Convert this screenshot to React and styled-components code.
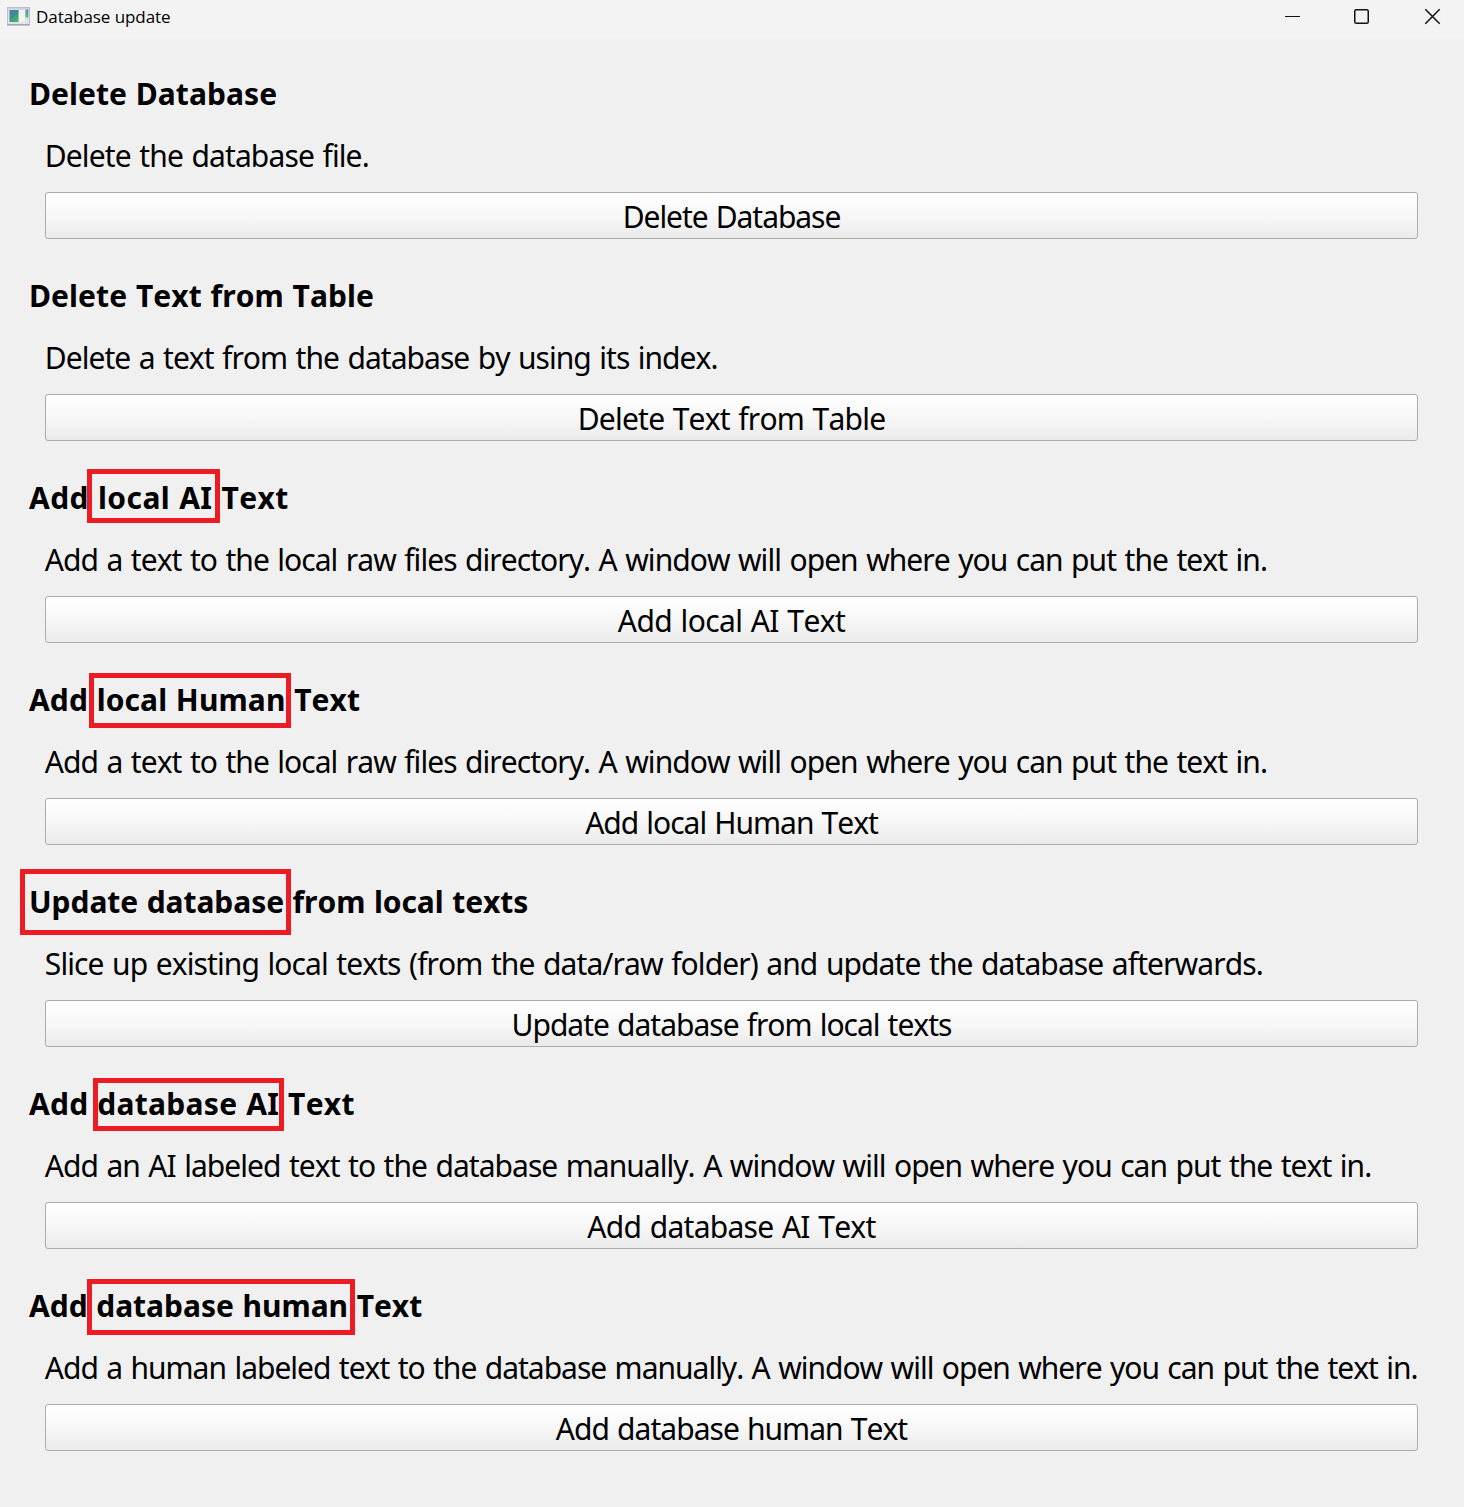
import React from 'react';
import styled, { createGlobalStyle } from 'styled-components';

const GlobalStyle = createGlobalStyle`
  * { box-sizing: border-box; }
  body { margin: 0; background: #f0f0f0; }
`;

const Window = styled.div`
  display: flex;
  flex-direction: column;
  width: 1464px;
  height: 1507px;
  overflow: hidden;
  background: #f0f0f0;
  color: #000;
  font-family: "Noto Sans", "Open Sans", sans-serif;
  font-kerning: none;
`;

const TitleBar = styled.header`
  display: flex;
  align-items: flex-start;
  flex: none;
  height: 39px;
  padding-left: 7px;
  background: #f3f3f3;
`;

const AppIcon = styled.svg`
  flex: none;
  width: 23px;
  height: 19px;
  margin-top: 7px;
`;

const WindowTitle = styled.h1`
  flex: 1;
  margin: 0;
  padding-left: 6px;
  font: 400 17px/34px "Open Sans", "Noto Sans", sans-serif;
  letter-spacing: -0.06px;
`;

const WindowControls = styled.div`
  display: flex;
  height: 33px;
`;

const ControlButton = styled.button`
  display: flex;
  align-items: center;
  justify-content: center;
  width: ${(p) => p.$width}px;
  height: 33px;
  padding: 0 0 0 ${(p) => p.$indent || 0}px;
  border: 0;
  background: transparent;
`;

const Glyph = styled.svg`
  display: block;
  width: 17px;
  height: 17px;
  fill: none;
  stroke: #111;
`;

const Content = styled.main`
  display: flex;
  flex-direction: column;
  gap: 36px;
  padding: 34px 46px 0 28px;
`;

const Section = styled.section`
  display: flex;
  flex-direction: column;
`;

const Heading = styled.h2`
  position: relative;
  height: 40px;
  margin: 0;
  padding-left: 1px;
  font-size: 30px;
  font-weight: 700;
  line-height: 42px;
  letter-spacing: ${(p) => p.$spacing}px;
  word-spacing: 0.8px;
  white-space: nowrap;
`;

const Marker = styled.span`
  position: absolute;
  left: ${(p) => p.$left}px;
  top: ${(p) => p.$top}px;
  width: ${(p) => p.$width}px;
  height: ${(p) => p.$height}px;
  border: 5px solid #ed1c24;
  pointer-events: none;
`;

const SectionBody = styled.div`
  display: flex;
  flex-direction: column;
  gap: 17px;
  padding: 22px 0 0 17px;
`;

const Description = styled.p`
  height: 40px;
  margin: 0 -10px 0 -0.2px;
  font-size: 30px;
  line-height: 42px;
  letter-spacing: ${(p) => p.$spacing}px;
  word-spacing: 1.6px;
  font-variant-ligatures: none;
  white-space: nowrap;
`;

const ActionButton = styled.button`
  height: 47px;
  margin: 0;
  padding: 3px 0 0;
  border: 1px solid #acacac;
  border-radius: 3px;
  background: linear-gradient(#fff 0%, #f8f8f8 45%, #ebebeb 100%);
  color: #000;
  font: 400 30px/40px "Noto Sans", "Open Sans", sans-serif;
  font-kerning: none;
  letter-spacing: ${(p) => p.$spacing}px;
  word-spacing: 1.3px;
  white-space: nowrap;
`;

const LOCAL_TEXT =
  'Add a text to the local raw files directory. A window will open where you can put the text in.';

const sections = [
  {
    title: 'Delete Database', titleSpacing: 0.07, buttonSpacing: -1.04,
    text: 'Delete the database file.', textSpacing: -0.88,
  },
  {
    title: 'Delete Text from Table', titleSpacing: 0.09, buttonSpacing: -0.76,
    text: 'Delete a text from the database by using its index.', textSpacing: -0.96,
  },
  {
    title: 'Add local AI Text', titleSpacing: 0.42, buttonSpacing: -0.62,
    text: LOCAL_TEXT, textSpacing: -0.952,
    marker: { left: 59, top: -8, width: 133, height: 54 },
  },
  {
    title: 'Add local Human Text', titleSpacing: 0.09, buttonSpacing: -1.0,
    text: LOCAL_TEXT, textSpacing: -0.952,
    marker: { left: 61, top: -6, width: 202, height: 55 },
  },
  {
    title: 'Update database from local texts', titleSpacing: -0.06, buttonSpacing: -1.0,
    text: 'Slice up existing local texts (from the data/raw folder) and update the database afterwards.',
    textSpacing: -0.905,
    marker: { left: -8, top: -12, width: 271, height: 66 },
  },
  {
    title: 'Add database AI Text', titleSpacing: 0.27, buttonSpacing: -0.71,
    text: 'Add an AI labeled text to the database manually. A window will open where you can put the text in.',
    textSpacing: -0.958,
    marker: { left: 65, top: -5, width: 191, height: 53 },
  },
  {
    title: 'Add database human Text', titleSpacing: -0.02, buttonSpacing: -0.97,
    text: 'Add a human labeled text to the database manually. A window will open where you can put the text in.',
    textSpacing: -1.002,
    marker: { left: 59, top: -6, width: 268, height: 56 },
  },
];

function ProgramIcon() {
  return (
    <AppIcon viewBox="0 0 23 19" aria-hidden="true">
      <defs>
        <linearGradient id="pane" x1="0" y1="0" x2="0.6" y2="1">
          <stop offset="0" stopColor="#4c7fb4" />
          <stop offset="0.5" stopColor="#3c8c93" />
          <stop offset="1" stopColor="#48b468" />
        </linearGradient>
        <linearGradient id="strip" x1="0" y1="0" x2="0" y2="1">
          <stop offset="0" stopColor="#5d8fc4" />
          <stop offset="1" stopColor="#58b768" />
        </linearGradient>
      </defs>
      <rect x="0.5" y="0.5" width="22" height="17.5" fill="#dfe3e8" stroke="#b9bfc8" />
      <rect x="1" y="1" width="21" height="1.6" fill="#cdd3da" />
      <rect x="2.5" y="3" width="9" height="12" fill="url(#pane)" />
      <rect x="12" y="3" width="6" height="12" fill="#f1f2f4" />
      <rect x="18.5" y="2.5" width="2.8" height="8" fill="url(#strip)" />
      <path d="M0.5 17.8H22.5" stroke="#8d959d" />
    </AppIcon>
  );
}

export default function App() {
  return (
    <>
      <GlobalStyle />
      <Window>
        <TitleBar>
          <ProgramIcon />
          <WindowTitle>Database update</WindowTitle>
          <WindowControls>
            <ControlButton $width={69} aria-label="Minimize">
              <Glyph viewBox="0 0 17 17"><path d="M1 8.5H16" /></Glyph>
            </ControlButton>
            <ControlButton $width={69} aria-label="Maximize">
              <Glyph viewBox="0 0 17 17">
                <rect x="1.75" y="1.75" width="13.5" height="13.5" rx="1.6" strokeWidth="1.5" />
              </Glyph>
            </ControlButton>
            <ControlButton $width={68} $indent={5} aria-label="Close">
              <Glyph viewBox="0 0 17 17"><path d="M1.3 1.3L15.7 15.7M15.7 1.3L1.3 15.7" strokeWidth="1.5" /></Glyph>
            </ControlButton>
          </WindowControls>
        </TitleBar>
        <Content>
          {sections.map((s) => (
            <Section key={s.title}>
              <Heading $spacing={s.titleSpacing}>
                {s.title}
                {s.marker && (
                  <Marker
                    $left={s.marker.left}
                    $top={s.marker.top}
                    $width={s.marker.width}
                    $height={s.marker.height}
                  />
                )}
              </Heading>
              <SectionBody>
                <Description $spacing={s.textSpacing}>{s.text}</Description>
                <ActionButton $spacing={s.buttonSpacing}>{s.title}</ActionButton>
              </SectionBody>
            </Section>
          ))}
        </Content>
      </Window>
    </>
  );
}
